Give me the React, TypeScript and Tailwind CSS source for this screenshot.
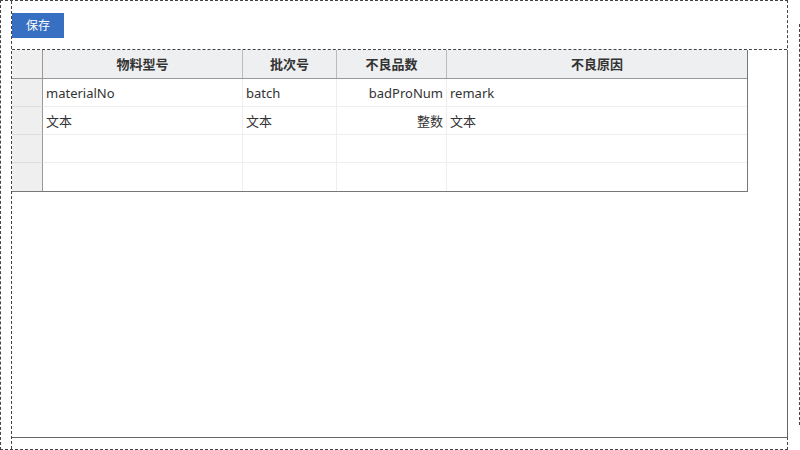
import React from "react";

const columns = [
  { key: "materialNo", title: "物料型号", width: "w-[200px]", align: "text-left" },
  { key: "batch", title: "批次号", width: "w-[94px]", align: "text-left" },
  { key: "badProNum", title: "不良品数", width: "w-[110px]", align: "text-right" },
  { key: "remark", title: "不良原因", width: "flex-1", align: "text-left" },
];

const rows: string[][] = [
  ["materialNo", "batch", "badProNum", "remark"],
  ["文本", "文本", "整数", "文本"],
  ["", "", "", ""],
  ["", "", "", ""],
];

export default function App() {
  return (
    <div
      className="w-[800px] h-[450px] bg-white flex text-[#333] text-[13px]"
      style={{ fontFamily: '"Noto Sans", "Noto Sans CJK SC", sans-serif' }}
    >
      {/* designer frame */}
      <div className="w-[788px] h-[450px] border border-dashed border-[#444] flex shrink-0">
        <div className="w-[10px] shrink-0" />
        <div className="flex-1 flex flex-col border-l border-dashed border-[#444]">
          <div className="h-[49px] border-b border-dashed border-[#444] flex items-start pt-[12px]">
            <button className="w-[52px] h-[25px] bg-[#3770c2] text-white text-[12px] leading-none">
              保存
            </button>
          </div>

          <div className="h-[388px] border-b border-r border-[#666] -mr-px">
            <div className="w-[736px] border-r border-b border-[#777] flex flex-col">
              <div className="flex h-[29px] bg-[#eeeff0] border-b border-[#999]">
                <div className="w-[31px] border-r border-[#999] bg-[#efefef]" />
                {columns.map((c, i) => (
                  <div
                    key={c.key}
                    className={`${c.width} flex items-center justify-center font-bold pt-[1px] ${
                      i < columns.length - 1 ? "border-r border-[#bbb]" : ""
                    }`}
                  >
                    {c.title}
                  </div>
                ))}
              </div>
              {rows.map((r, ri) => (
                <div key={ri} className={`flex h-[28px] ${ri < rows.length - 1 ? "border-b border-[#eee]" : ""}`}>
                  <div
                    className={`w-[31px] bg-[#efefef] border-r border-[#999] ${
                      ri < rows.length - 1 ? "border-b border-b-[#ddd] -mb-px" : ""
                    }`}
                  />
                  {columns.map((c, ci) => (
                    <div
                      key={c.key}
                      className={`${c.width} flex items-center px-[3px] pt-[2px] ${
                        c.align === "text-right" ? "justify-end" : "justify-start"
                      } ${ci < columns.length - 1 ? "border-r border-[#eee]" : ""}`}
                    >
                      {r[ci]}
                    </div>
                  ))}
                </div>
              ))}
            </div>
          </div>
        </div>
      </div>

      <div className="w-[11px] shrink-0" />
      <div className="mt-[24px] h-[401px] border-l border-dashed border-[#444]" />
    </div>
  );
}
